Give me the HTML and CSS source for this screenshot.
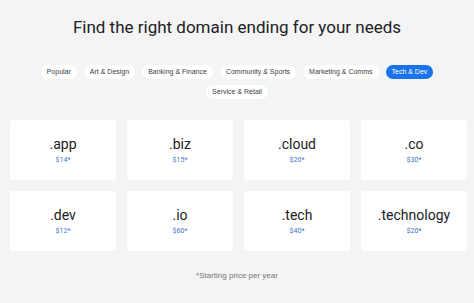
FILE: index.html
```html
<!DOCTYPE html>
<html>
<head>
<meta charset="utf-8">
<link rel="stylesheet" href="styles.css">
</head>
<body>
<div class="page">
  <h1 class="title">Find the right domain ending for your needs</h1>
  <div class="chips">
    <span class="chip">Popular</span>
    <span class="chip">Art &amp; Design</span>
    <span class="chip">Banking &amp; Finance</span>
    <span class="chip">Community &amp; Sports</span>
    <span class="chip">Marketing &amp; Comms</span>
    <span class="chip chip-active">Tech &amp; Dev</span>
    <span class="chip">Service &amp; Retail</span>
  </div>
  <div class="grid">
    <div class="card"><div class="name">.app</div><div class="price">$14*</div></div>
    <div class="card"><div class="name">.biz</div><div class="price">$15*</div></div>
    <div class="card"><div class="name">.cloud</div><div class="price">$20*</div></div>
    <div class="card"><div class="name">.co</div><div class="price">$30*</div></div>
    <div class="card"><div class="name">.dev</div><div class="price">$12*</div></div>
    <div class="card"><div class="name">.io</div><div class="price">$60*</div></div>
    <div class="card"><div class="name">.tech</div><div class="price">$40*</div></div>
    <div class="card"><div class="name">.technology</div><div class="price">$20*</div></div>
  </div>
  <p class="note">*Starting price per year</p>
</div>
</body>
</html>
```
FILE: styles.css
```css
html, body {
  margin: 0;
  padding: 0;
  background: #f4f4f4;
}
body {
  font-family: Roboto, "Liberation Sans", sans-serif;
  color: #202124;
}
.page {
  width: 474px;
  height: 303px;
  overflow: hidden;
}
.title {
  margin: 0;
  padding-top: 16px;
  font-size: 17px;
  line-height: 22px;
  font-weight: 400;
  text-align: center;
  color: #202124;
}
.chips {
  display: flex;
  flex-wrap: wrap;
  justify-content: center;
  gap: 6px 7px;
  padding: 0 10px;
  margin-top: 27px;
}
.chip {
  height: 14px;
  line-height: 14px;
  padding: 0 6px;
  border-radius: 7px;
  background: #ffffff;
  font-family: "Liberation Sans", Arial, sans-serif;
  font-size: 7px;
  color: #3c4043;
}
.chip-active {
  background: #1a73e8;
  color: #ffffff;
}
.grid {
  display: grid;
  grid-template-columns: repeat(4, 106px);
  grid-auto-rows: 60px;
  gap: 11px;
  padding: 0 9px 0 10px;
  margin-top: 21px;
}
.card {
  background: #ffffff;
  border-radius: 3px;
  display: flex;
  flex-direction: column;
  align-items: center;
  justify-content: center;
}
.name {
  font-size: 14px;
  line-height: 17px;
  color: #202124;
}
.price {
  margin-top: 3px;
  font-size: 7px;
  line-height: 9px;
  color: #4175c3;
}
.note {
  margin: 20px 0 0;
  text-align: center;
  font-family: "Liberation Sans", Arial, sans-serif;
  font-size: 8px;
  color: #777777;
}
```
